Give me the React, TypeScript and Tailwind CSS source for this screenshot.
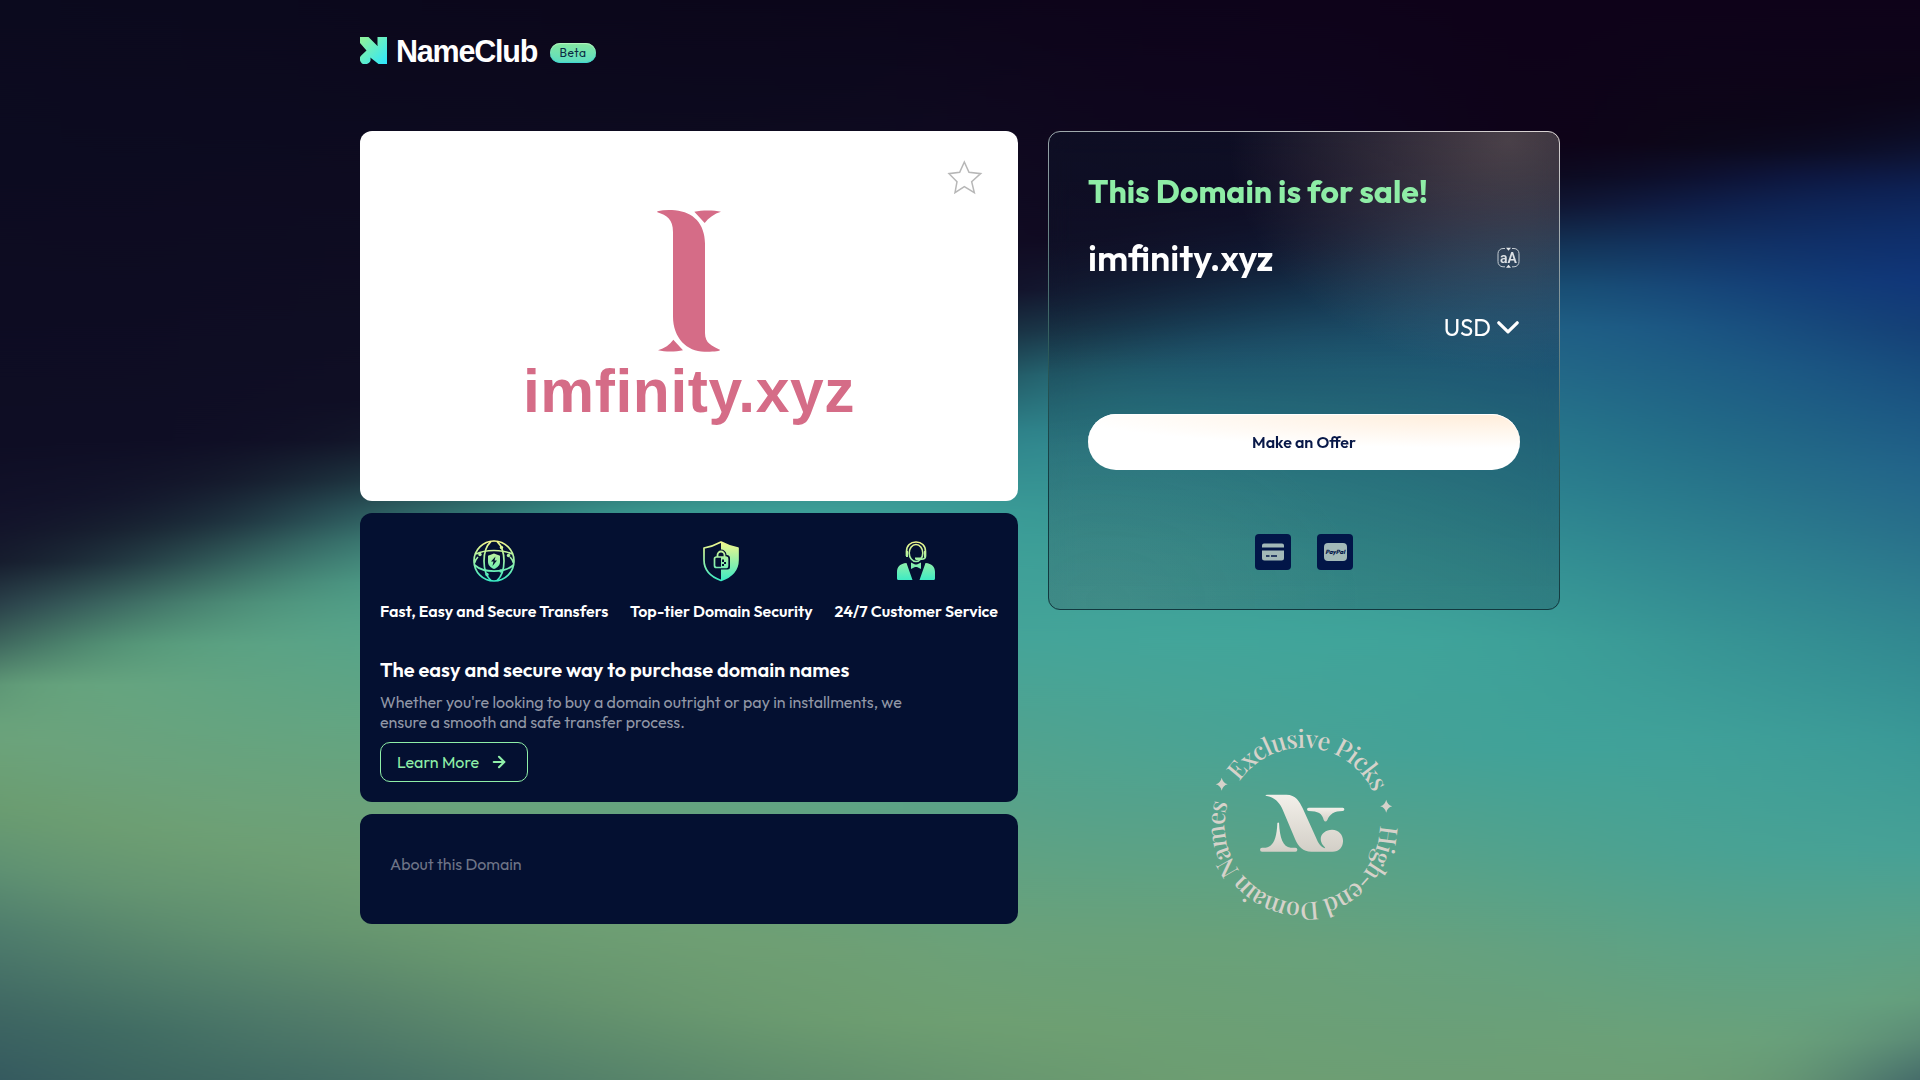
import React from 'react';
import { ArrowRight } from 'lucide-react';

type Stop = [number, string];

interface Column {
  x: number;
  stops: Stop[];
}

// Aurora backdrop: vertical gradients that get blurred into each other sideways
const auroraColumns: Column[] = [
  { x: -120, stops: [[0, '#0b0a1e'], [470, '#0e0d24'], [560, '#12122a'], [610, '#151a2b'], [650, '#2a3f4a'], [690, '#40695f'], [725, '#64a07a'], [765, '#6b9d70'], [830, '#5f9273'], [890, '#4e7d6d'], [980, '#3f6763'], [1080, '#2e5058']] },
  { x: 0, stops: [[0, '#0b0a1e'], [440, '#0e0d24'], [522, '#12122a'], [562, '#151a2b'], [603, '#2a3f4a'], [644, '#40695f'], [685, '#64a07a'], [742, '#6ca37b'], [807, '#6b9d70'], [869, '#5f9273'], [930, '#4e7d6d'], [1011, '#3f6763'], [1080, '#355a60']] },
  { x: 120, stops: [[0, '#0b091d'], [440, '#0e0d24'], [500, '#12142a'], [530, '#17202f'], [562, '#213540'], [603, '#3d6a62'], [644, '#569878'], [685, '#66a580'], [766, '#6ba27c'], [828, '#6d9e72'], [889, '#649471'], [971, '#4f7c69'], [1032, '#3f6b62'], [1080, '#3b645f']] },
  { x: 240, stops: [[0, '#0b091d'], [440, '#0f0e25'], [481, '#151a2c'], [522, '#1f3440'], [562, '#36645f'], [603, '#4f9179'], [644, '#5ca384'], [726, '#64a480'], [807, '#6ca279'], [848, '#6d9f74'], [930, '#609170'], [1011, '#4d7969'], [1080, '#3f6962']] },
  { x: 360, stops: [[0, '#0b081c'], [400, '#0f0e24'], [440, '#121428'], [481, '#1e3540'], [509, '#2b555a'], [542, '#3c7a72'], [583, '#4d9a85'], [624, '#55a38a'], [726, '#63a582'], [807, '#6ba27a'], [869, '#6f9f74'], [930, '#67966f'], [1011, '#557f6a'], [1080, '#456f66']] },
  { x: 480, stops: [[0, '#0b071b'], [400, '#0f1026'], [455, '#1c303e'], [511, '#317371'], [560, '#46978a'], [640, '#54a48c'], [807, '#69a37c'], [900, '#6e9f73'], [960, '#67976f'], [1030, '#59866b'], [1080, '#4d7968']] },
  { x: 600, stops: [[0, '#0b071b'], [380, '#0f1026'], [450, '#1f4653'], [511, '#379089'], [640, '#50a490'], [807, '#66a37e'], [920, '#6e9f74'], [1000, '#66946e'], [1080, '#55826a']] },
  { x: 720, stops: [[0, '#0b061a'], [350, '#0f1026'], [430, '#1f4653'], [511, '#3b9c94'], [640, '#4ca493'], [807, '#64a380'], [940, '#6f9f73'], [1010, '#6a9970'], [1080, '#5c8a6b']] },
  { x: 840, stops: [[0, '#0b061a'], [320, '#0f1026'], [400, '#1f4653'], [460, '#307f86'], [511, '#3d9f98'], [640, '#48a496'], [807, '#5fa384'], [950, '#6e9f74'], [1020, '#6c9c70'], [1080, '#62906d']] },
  { x: 960, stops: [[0, '#0c051a'], [290, '#110e26'], [370, '#1f4653'], [430, '#2d7d85'], [511, '#3b9c97'], [640, '#45a498'], [807, '#5ba287'], [950, '#6ca178'], [1020, '#6e9f72'], [1080, '#67966f']] },
  { x: 1080, stops: [[0, '#0d041a'], [240, '#100920'], [290, '#141a32'], [330, '#1b3b4c'], [375, '#27717c'], [447, '#328c92'], [547, '#3c9e97'], [640, '#44a499'], [807, '#55a28b'], [930, '#68a17b'], [1030, '#6e9f72'], [1080, '#6a9a70']] },
  { x: 1200, stops: [[0, '#0d031a'], [210, '#0f0820'], [260, '#13152f'], [305, '#183850'], [350, '#21617a'], [400, '#297a8a'], [470, '#338f93'], [550, '#3b9d97'], [640, '#42a59a'], [750, '#4ba393'], [850, '#5ba286'], [940, '#69a179'], [1080, '#6d9e72']] },
  { x: 1320, stops: [[0, '#0e031a'], [190, '#0f0720'], [240, '#12152f'], [290, '#173d59'], [340, '#21617c'], [400, '#287788'], [480, '#328d92'], [560, '#3b9d98'], [640, '#40a49a'], [750, '#47a296'], [850, '#58a288'], [950, '#69a17b'], [1080, '#6d9e73']] },
  { x: 1440, stops: [[0, '#0e0219'], [165, '#0e051b'], [215, '#101432'], [265, '#163a5c'], [315, '#1e5a7b'], [370, '#256d87'], [440, '#2b7d8c'], [510, '#328d92'], [580, '#3a9b97'], [640, '#3fa39a'], [750, '#43a297'], [850, '#54a28b'], [950, '#66a17e'], [1080, '#6c9e75']] },
  { x: 1560, stops: [[0, '#0e0219'], [143, '#0e0218'], [176, '#0c0a1f'], [204, '#101530'], [245, '#133456'], [286, '#184f74'], [327, '#1f5f85'], [367, '#226687'], [429, '#26748a'], [490, '#2b7f8e'], [551, '#328d92'], [640, '#3c9f98'], [750, '#40a299'], [850, '#4fa28e'], [950, '#62a181'], [1040, '#6ca077'], [1080, '#6c9e75']] },
  { x: 1680, stops: [[0, '#0e0219'], [143, '#0c0718'], [176, '#0d0f2c'], [204, '#0f1c45'], [245, '#123362'], [286, '#174778'], [327, '#1b5683'], [367, '#1e5f84'], [429, '#226b87'], [490, '#28788b'], [551, '#2f8490'], [640, '#389695'], [740, '#40a199'], [850, '#4aa293'], [950, '#5da285'], [1040, '#6aa179'], [1080, '#6c9f75']] },
  { x: 1800, stops: [[0, '#0e0219'], [122, '#0c0518'], [150, '#0c0b22'], [176, '#0d1740'], [204, '#0e2455'], [245, '#103068'], [286, '#123d76'], [327, '#174a7c'], [367, '#1b5683'], [429, '#206385'], [490, '#266f89'], [551, '#2c7d8e'], [640, '#348f93'], [740, '#3d9d98'], [850, '#47a295'], [950, '#5ba287'], [1040, '#69a17b'], [1080, '#679975']] },
  { x: 1920, stops: [[0, '#0e0219'], [98, '#0c0518'], [135, '#0c0c25'], [160, '#0d1538'], [190, '#0d2155'], [230, '#0e2d69'], [280, '#10367a'], [327, '#143f76'], [367, '#174b7c'], [410, '#1b5683'], [470, '#22648a'], [530, '#286f8a'], [590, '#2e7d8e'], [640, '#318890'], [740, '#3a9997'], [850, '#47a196'], [930, '#5aa288'], [1000, '#66a07d'], [1040, '#5b8b76'], [1080, '#446b6b']] },
  { x: 2040, stops: [[0, '#0e0219'], [75, '#0c0518'], [112, '#0c0c25'], [140, '#0d1538'], [170, '#0d2155'], [215, '#0e2d69'], [280, '#0f3278'], [340, '#123b76'], [390, '#174b7c'], [440, '#1b5683'], [500, '#22648a'], [560, '#286f8a'], [620, '#2e7d8e'], [740, '#359092'], [850, '#439e97'], [930, '#579f88'], [980, '#5f977b'], [1030, '#4b7670'], [1080, '#2f4c5c']] },
];

const Aurora: React.FC = () => (
  <svg className="absolute inset-0 h-full w-full" viewBox="0 0 1920 1080" preserveAspectRatio="none" aria-hidden="true">
    <defs>
      {auroraColumns.map((col) => (
        <linearGradient key={col.x} id={`aurora-${col.x}`} gradientUnits="userSpaceOnUse" x1="0" y1="0" x2="0" y2="1080">
          {col.stops.map(([y, color]) => (
            <stop key={y} offset={y / 1080} stopColor={color} />
          ))}
        </linearGradient>
      ))}
      <filter id="aurora-blur" filterUnits="userSpaceOnUse" x="-300" y="0" width="2520" height="1080" colorInterpolationFilters="sRGB">
        <feGaussianBlur stdDeviation="60 0" />
      </filter>
    </defs>
    <g filter="url(#aurora-blur)">
      {auroraColumns.map((col) => {
        const left = col.x === -120 ? -300 : col.x - 60;
        const right = col.x === 2040 ? 2220 : col.x + 60;
        return <rect key={col.x} x={left} y="0" width={right - left} height="1080" fill={`url(#aurora-${col.x})`} />;
      })}
    </g>
  </svg>
);

const IconGradient: React.FC<{ id: string }> = ({ id }) => (
  <linearGradient id={id} gradientUnits="userSpaceOnUse" x1="0" y1="0" x2="0" y2="42">
    <stop offset="0" stopColor="#fbf88a" />
    <stop offset="1" stopColor="#35eac6" />
  </linearGradient>
);

const GlobeIcon: React.FC = () => (
  <svg width="42" height="42" viewBox="0 0 42 42" fill="none">
    <defs><IconGradient id="globe-fill" /></defs>
    <g stroke="url(#globe-fill)" strokeWidth="1.7">
      <circle cx="21" cy="21" r="20" />
      <path d="M18 1.3C13 6 11 13 11 21s2 15 7 19.7M24 1.3C29 6 31 13 31 21s-2 15-7 19.7" />
      <path d="M3 14c5-2.5 11-3.5 18-3.5S34 11.5 39 14M1.5 25C6 29 13 31.2 21 31.2S36 29 40.5 25" />
      <path d="M5 17C3 19 2 21 1.5 23M37 17c2 2 3 4 3.5 6" />
    </g>
    <path d="M21 13.5l6 2.2v6c0 3.5-2.4 5.7-6 7.3-3.6-1.6-6-3.8-6-7.3v-6z" fill="url(#globe-fill)" />
    <path d="M22.5 16.5l-4.5 5h2.5l-1 4.5 4.5-5.5h-2.5z" fill="#041031" />
    <g fill="url(#globe-fill)">
      <circle cx="28.5" cy="7.5" r="1.7" /><circle cx="7" cy="14.5" r="1.7" /><circle cx="35.5" cy="15.5" r="1.7" />
      <circle cx="14" cy="34.5" r="1.7" /><circle cx="28" cy="31" r="1.7" />
    </g>
  </svg>
);

const ShieldIcon: React.FC = () => (
  <svg width="42" height="42" viewBox="0 0 42 42" fill="none">
    <defs><IconGradient id="shield-fill" /></defs>
    <path d="M21 2C15.5 5 10 7 4 8v12c0 9 6 16.5 17 20.5C32 36.5 38 29 38 20V8C32 7 26.5 5 21 2z" stroke="url(#shield-fill)" strokeWidth="1.7" strokeLinejoin="round" />
    <path d="M21 2c5.5 3 11 5 17 6v12c0 9-6 16.5-17 20.5V29.5h6.5a2.5 2.5 0 0 0 2.5-2.5V18a3 3 0 0 0-3.5-3v-.5A5.5 5.5 0 0 0 21 9.5z" fill="url(#shield-fill)" />
    <path d="M17.5 17v-2a3.5 3.5 0 0 1 7 0V17" stroke="url(#shield-fill)" strokeWidth="1.8" />
    <rect x="14.5" y="17" width="13" height="10.5" rx="2" fill="#041031" stroke="url(#shield-fill)" strokeWidth="1.7" />
    <path d="M21 17h6.5v10.5h-6.5z" fill="url(#shield-fill)" />
    <path d="M22 19.5h2V22h-2zM24 22h2v2h-2zM22 24h2v2h-2z" fill="#041031" />
  </svg>
);

const AgentIcon: React.FC = () => (
  <svg width="42" height="42" viewBox="0 0 42 42" fill="none">
    <defs><IconGradient id="agent-fill" /></defs>
    <g stroke="url(#agent-fill)">
      <ellipse cx="21" cy="13" rx="6.8" ry="8.5" strokeWidth="1.6" />
      <path d="M11.5 16v-4.5C11.5 5.5 15.5 2 21 2s9.5 3.5 9.5 9.5V16c0 1.8-1.5 3.2-4 3.2H21" strokeWidth="1.7" />
    </g>
    <path d="M11 11h2v6h-2zM29 11h2v6h-2zM20 17.5h6v2h-6z" fill="url(#agent-fill)" />
    <path d="M11.500 23L17.500 40H3.5a1.5 1.500 0 0 1-1.5-1.5V32c0-5 3-8.500 9.500-9zM30.500 23L24.500 40h14a1.5 1.500 0 0 0 1.5-1.5V32c0-5-3-8.500-9.500-9z" fill="url(#agent-fill)" />
    <path d="M16 22.5l4 2h2l4-2v6.5l-4-2h-2l-4 2z" fill="url(#agent-fill)" />
  </svg>
);

const features = [
  { title: 'Fast, Easy and Secure Transfers', icon: <GlobeIcon /> },
  { title: 'Top-tier Domain Security', icon: <ShieldIcon /> },
  { title: '24/7 Customer Service', icon: <AgentIcon /> },
];

const Header: React.FC = () => (
  <header className="flex h-[131px] items-start pt-[37px]">
    <svg width="27" height="27" viewBox="0 0 27 27">
      <defs>
        <linearGradient id="brand" x1="0" y1="0" x2="1" y2="1">
          <stop offset="0.1" stopColor="#8bf3a0" />
          <stop offset="1" stopColor="#2be6ff" />
        </linearGradient>
      </defs>
      <path d="M0 0H8.5L17.5 9V0H27V27H18.5L10.3 20.5A5.3 5.3 0 1 1 2 17.8L6.5 13.5L0 6Z" fill="url(#brand)" />
    </svg>
    <span className="ml-[8px] w-[143px] whitespace-nowrap pl-px font-['Liberation_Sans',sans-serif] text-[30.5px] font-bold leading-[28px] tracking-[-1.2px] text-white">NameClub</span>
    <span className="ml-[12px] mt-[6px] flex h-5 w-[46px] items-center justify-center rounded-full bg-gradient-to-b from-[#84e8a0] to-[#5bdcc0] text-[12px] tracking-[0.5px] text-[#0a2a45] shadow-[inset_0_-1px_1px_#3fd6d2,inset_0_1px_1px_#b5f5c0]">Beta</span>
  </header>
);

const LogoCard: React.FC = () => (
  <section className="relative flex h-[370px] flex-col items-center rounded-xl bg-white pt-[78px]">
    <svg className="mr-px" width="64" height="144" viewBox="470 56 192 434" preserveAspectRatio="none" fill="#d56c87">
      <path d="M471 63C488 59 505 58 524 60C580 66 613 100 614 160V430C614 462 635 468 660 481C655 486 635 486 612 486C560 486 518 445 518 380V125C518 88 500 75 471 66Z" />
      <path d="M582 64C605 59 640 59 662 64C642 70 625 82 613 98Z" />
      <path d="M473 482C493 476 508 465 519 450L548 482C525 487 495 487 473 482Z" />
    </svg>
    <span className="mt-[8px] whitespace-nowrap font-['Liberation_Sans',sans-serif] text-[60.5px] font-bold leading-[60px] tracking-[0.6px] text-[#d56c87]">imfinity.xyz</span>
    <svg className="absolute right-[35px] top-[29px]" width="36" height="36" viewBox="81 59 108 108" fill="none" stroke="#b7b7b7" strokeWidth="4.500">
      <path d="M133 65L147 96L182 100L155 124L163 157L133 139L105 157L111 124L87 100L119 96Z" />
    </svg>
  </section>
);

const FeatureCard: React.FC = () => (
  <section className="h-[289px] rounded-xl bg-[#041031] px-5 pt-[27px]">
    <div className="flex justify-between">
      {features.map((feature) => (
        <div key={feature.title} className="flex flex-col items-center">
          {feature.icon}
          <h3 className="mt-[19px] whitespace-nowrap text-base font-semibold leading-5 text-white">{feature.title}</h3>
        </div>
      ))}
    </div>
    <h2 className="mt-[36px] text-[20px] font-semibold leading-[26px] text-white">The easy and secure way to purchase domain names</h2>
    <p className="mt-[9px] w-[560px] text-base leading-5 text-[#9197a6]">
      Whether you're looking to buy a domain outright or pay in installments, we
      <br />
      ensure a smooth and safe transfer process.
    </p>
    <button className="mt-[10px] flex h-10 w-[148px] items-center rounded-[10px] border border-[#8fefa8] pl-4 text-base text-[#8fefa8]">
      <span className="w-[82px] whitespace-nowrap">Learn More</span>
      <ArrowRight className="ml-[11px]" size={18} strokeWidth={2.8} />
    </button>
  </section>
);

const SalePanel: React.FC = () => (
  <section className="relative h-[479px] rounded-xl bg-[radial-gradient(ellipse_280px_230px_at_460px_10px,rgba(255,220,190,0.25),rgba(255,220,190,0)),radial-gradient(ellipse_260px_190px_at_60px_470px,rgba(255,225,200,0.05),rgba(255,225,200,0)),linear-gradient(rgba(14,24,44,0.45),rgba(14,28,50,0.22)_50%,rgba(14,28,50,0.2))] px-10 backdrop-blur-md">
    <svg className="pointer-events-none absolute inset-0" width="512" height="479" fill="none">
      <defs>
        <linearGradient id="edge" gradientUnits="userSpaceOnUse" x1="400" y1="-20" x2="300" y2="430">
          <stop offset="0" stopColor="#d8d2d2" />
          <stop offset="0.3" stopColor="#8b9ba0" />
          <stop offset="0.7" stopColor="#2c5a58" />
          <stop offset="1" stopColor="#12393f" />
        </linearGradient>
      </defs>
      <rect x="0.5" y="0.5" width="511" height="478" rx="11.5" stroke="url(#edge)" />
    </svg>
    <h1 className="pt-[40px] text-[32px] font-bold leading-[40px] text-[#8eeda6]">This Domain is for sale!</h1>
    <div className="mt-[24px] flex h-[46px] items-center justify-between">
      <span className="text-[36px] font-semibold leading-[46px] text-white">imfinity.xyz</span>
      <svg width="23" height="22" viewBox="0 0 23 22" fill="none">
        <path d="M8 1.5H6A5 5 0 0 0 1 6.5v8A5 5 0 0 0 6 19.8h2M15 1.5h2A5 5 0 0 1 22 6.5v8A5 5 0 0 1 17 19.8h-2" stroke="#c4ccd2" strokeWidth="1" />
        <path d="M9 .8h5l-2.5 3zM9 20.7h5l-2.5-3z" fill="#e5e8ea" />
        <text x="11.5" y="15.8" textAnchor="middle" fontFamily="Roboto, sans-serif" fontWeight="600" fontSize="14" fill="#dde1e5">aA</text>
      </svg>
    </div>
    <div className="mt-[29px] flex h-[34px] items-center justify-end text-white">
      <span className="text-[24px] leading-[34px]">USD</span>
      <svg className="ml-[6px] mr-px" width="22" height="14" viewBox="0 0 22 14" fill="none">
        <path d="M1.8 2.8L11 11.8L20.2 2.8" stroke="white" strokeWidth="3.2" strokeLinecap="round" strokeLinejoin="round" />
      </svg>
    </div>
    <button className="mt-[70px] flex h-14 w-full items-center justify-center rounded-full bg-[radial-gradient(ellipse_420px_34px_at_400px_0px,#ffedda,#ffffff)] text-base font-semibold text-[#081848] shadow-[inset_0_1px_0_#ffffff]">Make an Offer</button>
    <div className="mt-[64px] flex justify-center gap-[26px]">
      <div className="flex h-9 w-9 items-center justify-center rounded bg-[#021648]">
        <svg width="24" height="18" viewBox="0 0 24 18">
          <path d="M1 4.5V2.5A2 2 0 0 1 3 .5h18a2 2 0 0 1 2 2v2zM1 7.5h22V15a2.5 2.5 0 0 1-2.5 2.5h-17A2.5 2.5 0 0 1 1 15z" fill="#a2b9b8" />
          <path d="M5 13h3.5M10 13h6" stroke="#021648" strokeWidth="1.3" />
        </svg>
      </div>
      <div className="flex h-9 w-9 items-center justify-center rounded bg-[#021648]">
        <span className="flex h-[18px] w-[23px] items-center justify-center rounded-sm bg-[#a2b9b8] text-[6px] font-extrabold italic leading-none text-[#021648]">PayPal</span>
      </div>
    </div>
  </section>
);

const sparkle = 'M0 -6.5Q1.2 -1.2 6 0Q1.2 1.2 0 6.5Q-1.2 1.2 -6 0Q-1.2 -1.2 0 -6.5Z';

const PicksSeal: React.FC = () => (
  <svg className="mt-[104px]" width="220" height="220" viewBox="-110 -110 220 220">
    <defs>
      <path id="ring-top" d="M-63.8 -43.1A77 77 0 0 1 70.8 -30.3" />
      <path id="ring-bottom" d="M76.5 0.5A77.500 77.500 0 1 1 -75.500 -21.2" />
      <linearGradient id="seal" x1="0" y1="0" x2="0" y2="1">
        <stop offset="0" stopColor="#f3f0ea" />
        <stop offset="1" stopColor="#d3cfc7" />
      </linearGradient>
    </defs>
    <g fill="#d6d2ca" fontFamily="'Playfair Display', 'Liberation Serif', serif" fontSize="25" fontWeight="500" transform="translate(-0.8 0.8)">
      <text textLength="163"><textPath href="#ring-top">Exclusive Picks</textPath></text>
      <text textLength="265"><textPath href="#ring-bottom">High-end Domain Names</textPath></text>
      <path d={sparkle} transform="translate(83 -18.5)" />
      <path d={sparkle} transform="translate(-81.5 -40.5)" />
    </g>
    <g fill="url(#seal)" transform="translate(-114.3 -114.3) scale(0.33333)">
      <path d="M228 256Q230 255 234 255H290C318 255 330 276 339 296L378 382C386 402 394 413 406 416C408 414 403 411 400 407C382 382 402 360 427 360C448 360 460 376 460 393C460 412 448 426 428 426H365C340 426 326 410 317 390L279 300C270 279 255 262 228 258Z" />
      <path d="M263 340Q265.5 337 268 340C270 385 280 412 303 414H317A6 6 0 0 1 317 426H217A6 6 0 0 1 217 414H228C252 410 261 385 263 340Z" />
      <path d="M357 294H459A5 5 0 0 1 459 304C434 304 419 314 413 331Q407 340 402 331C398 312 385 304 357 304A5 5 0 0 1 357 294Z" />
    </g>
  </svg>
);

const App: React.FC = () => {
  return (
    <div className="relative h-[1080px] w-full overflow-hidden bg-[#0c0a1e] font-['Outfit','Lato',sans-serif]">
      <Aurora />
      <div className="relative mx-auto w-[1200px]">
        <Header />
        <main className="flex gap-[30px]">
          <div className="flex w-[658px] flex-col gap-3">
            <LogoCard />
            <FeatureCard />
            <section className="h-[110px] rounded-xl bg-[#041031] px-[30px] pt-[40px] text-base leading-5 text-[#6e7487]">About this Domain</section>
          </div>
          <div className="flex w-[512px] flex-col items-center">
            <div className="w-full">
              <SalePanel />
            </div>
            <PicksSeal />
          </div>
        </main>
      </div>
    </div>
  );
};

export default App;
